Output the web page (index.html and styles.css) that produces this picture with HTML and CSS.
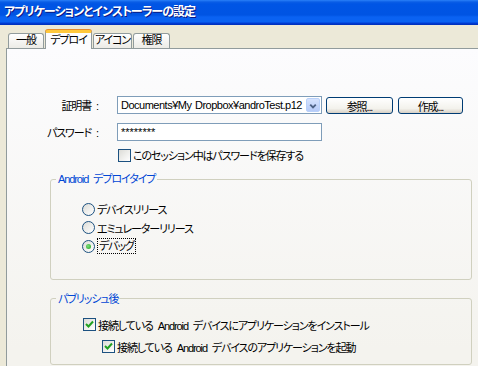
FILE: index.html
```html
<!DOCTYPE html>
<html lang="ja">

<head>
    <meta charset="UTF-8">
    <meta name="viewport" content="width=device-width, initial-scale=1.0">
    <title>アプリケーションとインストーラーの設定</title>
    <link rel="stylesheet" href="styles.css">
</head>

<body>
    <div class="window">
        <div class="title-bar">アプリケーションとインストーラーの設定</div>

        <div class="tabs">
            <div class="tab tab-general">一般</div>
            <div class="tab active">デプロイ</div>
            <div class="tab tab-icon">アイコン</div>
            <div class="tab tab-perm">権限</div>
        </div>

        <div class="panel">
            <div class="form-row">
                <span class="field-label">証明書 :</span>
                <div class="combo">
                    <span class="combo-text">Documents¥My Dropbox¥androTest.p12</span>
                    <span class="combo-btn">
                        <svg width="13" height="14" viewBox="0 0 13 14">
                            <polyline points="3.5,5.5 6.5,8.5 9.5,5.5" fill="none" stroke="#4D6185" stroke-width="2"/>
                        </svg>
                    </span>
                </div>
                <button class="btn btn-browse">参照...</button>
                <button class="btn btn-create">作成...</button>
            </div>

            <div class="form-row password-row">
                <span class="field-label">パスワード :</span>
                <div class="text-input">********</div>
            </div>

            <div class="check-row save-row">
                <span class="checkbox"></span>
                <span>このセッション中はパスワードを保存する</span>
            </div>

            <fieldset class="group deploy-type">
                <legend>Android デプロイタイプ</legend>
                <div class="group-body">
                    <div class="radio-row"><span class="radio"></span><span>デバイスリリース</span></div>
                    <div class="radio-row"><span class="radio"></span><span>エミュレーターリリース</span></div>
                    <div class="radio-row"><span class="radio checked"></span><span class="focus">デバッグ</span></div>
                </div>
            </fieldset>

            <fieldset class="group after-publish">
                <legend>パブリッシュ後</legend>
                <div class="group-body">
                    <div class="check-row">
                        <span class="checkbox">
                            <svg width="11" height="11" viewBox="0 0 11 11">
                                <polyline points="2,5 4.5,7.5 9,2.5" fill="none" stroke="#21A121" stroke-width="2"/>
                            </svg>
                        </span>
                        <span>接続している Android デバイスにアプリケーションをインストール</span>
                    </div>
                    <div class="check-row sub">
                        <span class="checkbox">
                            <svg width="11" height="11" viewBox="0 0 11 11">
                                <polyline points="2,5 4.5,7.5 9,2.5" fill="none" stroke="#21A121" stroke-width="2"/>
                            </svg>
                        </span>
                        <span>接続している Android デバイスのアプリケーションを起動</span>
                    </div>
                </div>
            </fieldset>
        </div>
    </div>
</body>

</html>
```

FILE: styles.css
```css
html,
body {
    margin: 0;
    overflow: hidden;
}

body {
    font-family: "Liberation Sans", "Noto Sans CJK JP", sans-serif;
    font-size: 11px;
    font-feature-settings: "palt";
    letter-spacing: -1.1px;
    word-spacing: 3px;
    background: #ECE9D8;
    color: #000;
}

.window {
    width: 492px;
    height: 366px;
}

/* barra de titulo estilo XP */
.title-bar {
    height: 25px;
    box-sizing: border-box;
    padding: 0 4px;
    font-size: 12px;
    letter-spacing: -1px;
    line-height: 24px;
    color: #fff;
    font-weight: bold;
    text-shadow: 1px 1px #0A1883;
    background: linear-gradient(#2A80F8 0, #0A5DE6 2px, #0055E5 4px, #0054E3 15px, #0A62F2 17px, #0A62F2 22px, #003DD7 23px, #002EB8 25px);
}

.tabs {
    display: flex;
    align-items: flex-end;
    height: 23px;
    padding-left: 8px;
}

.tab {
    box-sizing: border-box;
    height: 15px;
    margin-right: 1px;
    border: 1px solid #919B9C;
    border-bottom: none;
    border-radius: 3px 3px 0 0;
    background: linear-gradient(#FFFFFF, #ECEBE6);
    text-align: center;
    white-space: nowrap;
    line-height: 13px;
}

.tab-general { width: 36px; }
.tab-icon { width: 39px; }
.tab-perm { width: 37px; }

.tab.active {
    position: relative;
    z-index: 1;
    width: 47px;
    height: 19px;
    margin-bottom: -1px;
    border-top: 3px solid #FFC83C;
    box-shadow: 0 -1px 0 #E68B2C;
    background: #FCFCFE;
    line-height: 15px;
}

.panel {
    height: 400px;
    margin-left: 6px;
    padding-top: 47px;
    border: 1px solid #919B9C;
    background: linear-gradient(#FCFCFE, #F4F3EE 300px);
}

.form-row {
    display: flex;
    align-items: center;
}

.field-label {
    width: 91px;
    margin-right: 19px;
    text-align: right;
}

.combo {
    display: flex;
    align-items: center;
    width: 205px;
    height: 18px;
    box-sizing: border-box;
    padding: 0 1px 0 3px;
    border: 1px solid #7F9DB9;
    background: #fff;
}

.combo-text {
    flex: 1;
    letter-spacing: -0.5px;
    word-spacing: 1px;
    white-space: nowrap;
    overflow: hidden;
}

.combo-btn {
    display: flex;
    width: 14px;
    height: 14px;
    box-sizing: border-box;
    border: 1px solid #B9D1FA;
    border-radius: 2px;
    background: linear-gradient(#D6E3FD, #B6CBF8);
}

.btn {
    height: 17px;
    padding: 0;
    border: 1px solid #003C74;
    border-radius: 3px;
    background: linear-gradient(#FFFFFF, #F3F2EC 70%, #D6D0C5);
    font: inherit;
    letter-spacing: inherit;
    color: #000;
}

.btn-browse {
    width: 67px;
    margin-left: 4px;
}

.btn-create {
    width: 65px;
    margin-left: 5px;
}

.password-row {
    margin-top: 9px;
}

.text-input {
    width: 205px;
    height: 18px;
    box-sizing: border-box;
    padding-left: 3px;
    border: 1px solid #7F9DB9;
    background: #fff;
    letter-spacing: 0;
    line-height: 16px;
}

.check-row {
    display: flex;
    align-items: center;
    height: 18px;
}

.save-row {
    margin: 5px 0 0 111px;
}

.checkbox {
    display: flex;
    align-items: center;
    justify-content: center;
    width: 13px;
    height: 13px;
    box-sizing: border-box;
    margin-right: 2px;
    border: 1px solid #1C5180;
    background: linear-gradient(135deg, #DCDCD7, #FFFFFF);
}

.group {
    width: 422px;
    box-sizing: border-box;
    margin: 0 0 0 43px;
    padding: 0;
    border: 1px solid #D0D0BF;
    border-radius: 3px;
}

.group legend {
    margin-left: 5px;
    padding: 0 2px;
    color: #0046D5;
    line-height: 14px;
}

.deploy-type {
    margin-top: 8px;
}

.deploy-type .group-body {
    padding: 14px 0 23px 31px;
}

.radio-row {
    display: flex;
    align-items: center;
    height: 18.5px;
}

.radio {
    position: relative;
    width: 13px;
    height: 13px;
    box-sizing: border-box;
    margin-right: 2px;
    border: 1px solid #1C5180;
    border-radius: 50%;
    background: linear-gradient(135deg, #DCDCD7, #FFFFFF);
}

.radio.checked::after {
    content: "";
    position: absolute;
    left: 3px;
    top: 3px;
    width: 5px;
    height: 5px;
    border-radius: 50%;
    background: radial-gradient(circle at 40% 40%, #7BE07B, #21A121);
}

.focus {
    border: 1px dotted #000;
    padding: 0 1px;
    line-height: 14px;
}

.after-publish {
    margin-top: 12px;
}

.after-publish .group-body {
    padding: 10px 0 8px 32px;
}

.after-publish .sub {
    margin: 4px 0 0 19px;
}
```
